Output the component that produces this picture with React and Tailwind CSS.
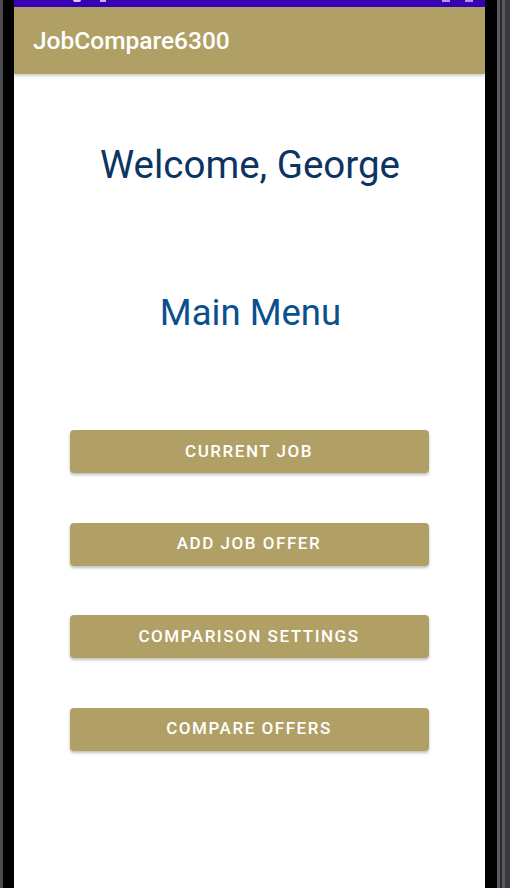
export default function App() {
  const buttons = ["CURRENT JOB", "ADD JOB OFFER", "COMPARISON SETTINGS", "COMPARE OFFERS"];
  return (
    <div className="flex h-[888px] w-[510px] overflow-hidden bg-black" style={{ fontFamily: "Roboto, 'Noto Sans', sans-serif" }}>
      <div className="w-[3px] bg-[#4b4b52]" />
      <div className="w-[11px] bg-black" />
      <div className="flex w-[471px] flex-col bg-white">
        <div className="relative h-[7px] bg-[#3700b3]">
          <div className="absolute left-[59px] top-0 h-[2px] w-[8px] rounded-b-full bg-white/80" />
          <div className="absolute left-[86px] top-0 h-[2px] w-[6px] bg-white/70" />
          <div className="absolute left-[428px] top-0 h-[2px] w-[8px] bg-white/60" />
          <div className="absolute left-[451px] top-0 h-[2px] w-[8px] bg-white/60" />
        </div>
        <div className="flex h-[67px] items-center bg-[#b1a065] pt-[2px] pl-[19px] shadow-[0_2px_3px_rgba(0,0,0,0.2)]">
          <span className="text-[24.5px] font-medium text-white">JobCompare6300</span>
        </div>
        <div className="flex flex-col items-center">
          <div className="mt-[66px] pl-[1px] text-[38.5px] leading-[50px] text-[#0c3462]">Welcome, George</div>
          <div className="mt-[100px] pl-[2px] text-[36.5px] leading-[46px] text-[#0a4f8f]">Main Menu</div>
          <div className="mt-[94px] flex w-[360px] flex-col gap-[49.5px] pr-[1px]">
            {buttons.map((b) => (
              <div
                key={b}
                className="flex h-[43px] items-center justify-center rounded-[4px] bg-[#b1a065] text-[17px] font-medium tracking-[0.09em] text-white shadow-[0_2px_3px_rgba(0,0,0,0.25)]"
              >
                {b}
              </div>
            ))}
          </div>
        </div>
      </div>
      <div className="w-[12px] bg-black" />
      <div className="w-[3px] bg-[#5a5a60]" />
      <div className="w-[2px] bg-[#2a2a2e]" />
      <div className="w-[3px] bg-[#5a5a60]" />
      <div className="w-[5px] bg-[#3a3a40]" />
    </div>
  );
}
